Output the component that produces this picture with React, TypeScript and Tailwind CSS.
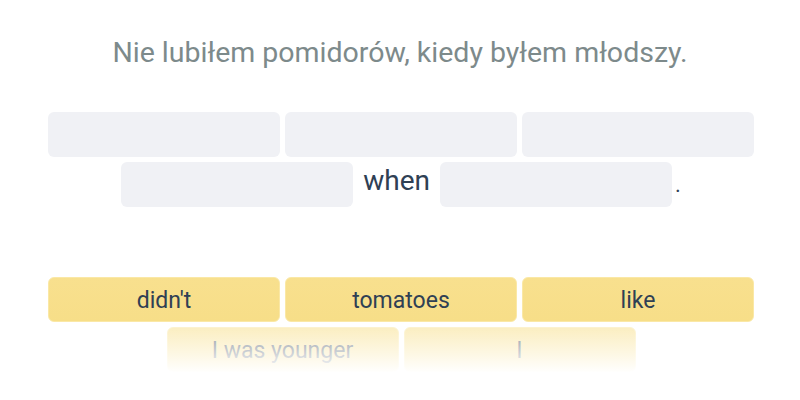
const chips = ["didn't", 'tomatoes', 'like', 'I was younger', 'I'];

function Blank() {
  return <div className="h-[45px] w-[232px] rounded-md bg-[#f0f1f5]" />;
}

function Chip({ label }: { label: string }) {
  return (
    <div className="flex h-[45px] w-[232px] items-center justify-center rounded-md border border-[#fae8a6] bg-gradient-to-b from-[#f8e08e] to-[#f7de88] pt-[3px] text-[23px] text-[#2f4054]">
      {label}
    </div>
  );
}

export default function App() {
  return (
    <div className="h-[400px] w-[800px] overflow-hidden bg-white font-['Roboto',sans-serif]">
      <div className="pt-[35px] text-center text-[28.5px] leading-9 text-[#7d8a8b]">
        Nie lubiłem pomidorów, kiedy byłem młodszy.
      </div>

      <div className="ml-[48px] mt-[41px] flex w-[706px] flex-wrap justify-center gap-[5px]">
        <Blank />
        <Blank />
        <Blank />
        <div className="flex items-center gap-[6px]">
          <Blank />
          <span className="px-1 pb-[7px] text-[28px] leading-none text-[#2f4054]">when</span>
          <Blank />
          <span className="-ml-[3px] text-[22px] text-[#2f4054]">.</span>
        </div>
      </div>

      <div className="relative ml-[48px] mt-[70px] w-[706px]">
        <div className="flex flex-wrap justify-center gap-[5px]">
          {chips.map((c) => (
            <Chip key={c} label={c} />
          ))}
        </div>
        <div className="absolute inset-x-0 top-[46px] h-[50px] bg-gradient-to-b from-white/40 to-white" />
      </div>
    </div>
  );
}
